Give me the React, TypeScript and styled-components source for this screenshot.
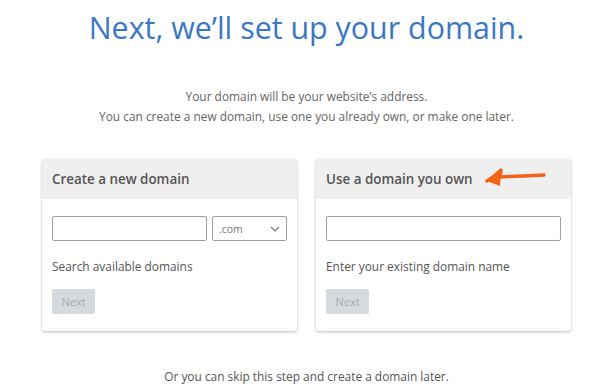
import styled, { createGlobalStyle } from 'styled-components';
import { FC } from 'react';

const GlobalStyle = createGlobalStyle`
    html, body {
        margin: 0;
        padding: 0;
        background: #ffffff;
    }
    body {
        font-family: 'Open Sans', 'Liberation Sans', sans-serif;
    }
`;

const Page = styled.div`
    width: 600px;
    height: 385px;
    box-sizing: border-box;
    padding: 8px 0 0 13px;
    display: flex;
    flex-direction: column;
    align-items: center;
    overflow: hidden;
`;

const Title = styled.h1`
    margin: 0;
    font-size: 30.4px;
    line-height: 40px;
    font-weight: 400;
    color: #3a78c5;
`;

const Intro = styled.p`
    margin: 38px 0 0;
    font-size: 11.9px;
    line-height: 20px;
    color: #666;
    text-align: center;
`;

const Cards = styled.div`
    display: flex;
    gap: 19px;
    margin-top: 33px;
`;

const Card = styled.section`
    position: relative;
    width: 255px;
    background: #fff;
    border-radius: 3px;
    box-shadow: 0 1px 3px rgba(0, 0, 0, 0.28);
    overflow: hidden;
`;

const CardHeader = styled.h2`
    margin: 0;
    height: 40px;
    padding: 0 10px;
    display: flex;
    align-items: center;
    background: #efefef;
    font-size: 13.4px;
    font-weight: 600;
    color: #555;
`;

const CardBody = styled.div`
    padding: 17px 10px 17px;
    display: flex;
    flex-direction: column;
    align-items: flex-start;
`;

const Fields = styled.div`
    display: flex;
    gap: 5px;
    width: 100%;
`;

const TextInput = styled.input`
    flex: 1;
    min-width: 0;
    height: 25px;
    box-sizing: border-box;
    border: 1px solid #a0a0a0;
    border-radius: 2px;
    padding: 0 6px;
    font-family: inherit;
    font-size: 12px;
`;

const Select = styled.div`
    width: 75px;
    height: 25px;
    box-sizing: border-box;
    border: 1px solid #a0a0a0;
    border-radius: 2px;
    padding: 0 6px 0 6px;
    display: flex;
    align-items: center;
    justify-content: space-between;
    font-size: 10.5px;
    color: #777;
`;

const Hint = styled.p`
    margin: 16px 0 0;
    font-size: 11.9px;
    line-height: 18px;
    color: #555;
`;

const NextButton = styled.button`
    margin-top: 14px;
    width: 43px;
    height: 25px;
    border: none;
    border-radius: 2px;
    background: #d6dade;
    color: #a8adb3;
    font-family: inherit;
    font-size: 11px;
    padding: 0;
`;

const Arrow = styled.svg`
    position: absolute;
    left: 168px;
    top: 6px;
`;

const Footer = styled.p`
    margin: 37px 0 0;
    font-size: 11.9px;
    color: #555;
`;

const Chevron: FC = () => (
    <svg width="10" height="6" viewBox="0 0 10 6">
        <path d="M1 1l4 4 4-4" fill="none" stroke="#777" strokeWidth="1.2" />
    </svg>
);

const App: FC = () => {
    return (
        <>
            <GlobalStyle />
            <Page>
                <Title>Next, we’ll set up your domain.</Title>
                <Intro>
                    Your domain will be your website’s address.
                    <br />
                    You can create a new domain, use one you already own, or make one later.
                </Intro>
                <Cards>
                    <Card>
                        <CardHeader>Create a new domain</CardHeader>
                        <CardBody>
                            <Fields>
                                <TextInput />
                                <Select>
                                    .com
                                    <Chevron />
                                </Select>
                            </Fields>
                            <Hint>Search available domains</Hint>
                            <NextButton disabled>Next</NextButton>
                        </CardBody>
                    </Card>
                    <Card>
                        <CardHeader>Use a domain you own</CardHeader>
                        <Arrow width="64" height="26" viewBox="0 0 64 26">
                            <path
                                d="M3 16 C8 13 12 10 17 5 L16 12 C28 11 42 11 60 10"
                                fill="none"
                                stroke="#f26217"
                                strokeWidth="3.5"
                                strokeLinecap="round"
                                strokeLinejoin="round"
                            />
                            <path d="M3 16 L17 5 L16 21 Z" fill="#f26217" />
                        </Arrow>
                        <CardBody>
                            <Fields>
                                <TextInput />
                            </Fields>
                            <Hint>Enter your existing domain name</Hint>
                            <NextButton disabled>Next</NextButton>
                        </CardBody>
                    </Card>
                </Cards>
                <Footer>Or you can skip this step and create a domain later.</Footer>
            </Page>
        </>
    );
};

export default App;
